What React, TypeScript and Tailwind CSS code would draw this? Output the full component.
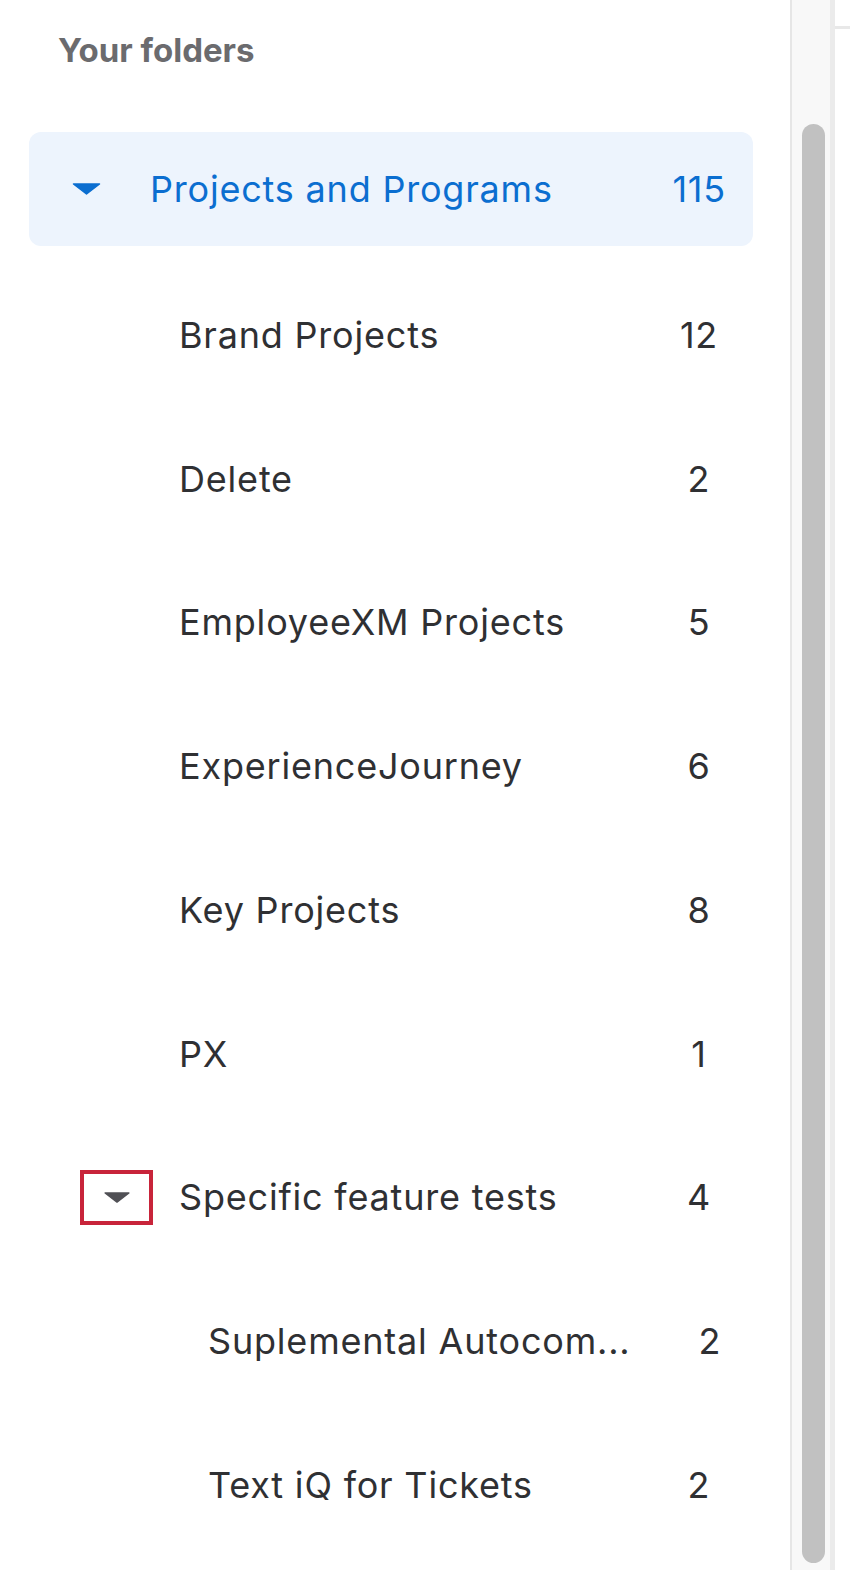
import React from "react";

type Row = { name: string; count: string; level: 1 | 2; toggle?: boolean; countShift?: boolean };

const rows: Row[] = [
  { name: "Brand Projects", count: "12", level: 1 },
  { name: "Delete", count: "2", level: 1 },
  { name: "EmployeeXM Projects", count: "5", level: 1 },
  { name: "ExperienceJourney", count: "6", level: 1 },
  { name: "Key Projects", count: "8", level: 1 },
  { name: "PX", count: "1", level: 1 },
  { name: "Specific feature tests", count: "4", level: 1, toggle: true },
  { name: "Suplemental Autocom...", count: "2", level: 2, countShift: true },
  { name: "Text iQ for Tickets", count: "2", level: 2 },
];

function Caret({ color, w, h }: { color: string; w: number; h: number }) {
  return (
    <svg width={w} height={h} viewBox="0 0 28 12" className="block">
      <path d="M1 1 L27 1 L14 11 Z" fill={color} stroke={color} strokeWidth="1.5" strokeLinejoin="round" />
    </svg>
  );
}

export default function App() {
  return (
    <div
      className="flex w-[850px] h-[1570px] overflow-hidden bg-white text-[#2f3033]"
      style={{ fontFamily: "Inter, Roboto, sans-serif" }}
    >
      {/* main panel */}
      <div className="w-[790px] flex flex-col">
        <div className="pl-[58px] pt-[28px] h-[132px]">
          <div className="text-[33px] leading-[44px] font-bold text-[#6b6b6e]">Your folders</div>
        </div>
        <div className="ml-[29px] w-[724px] h-[114px] rounded-[12px] bg-[#edf4fd] flex items-center pl-[43px] pr-[27px] text-[#0b6ed0] text-[36px] tracking-[0.8px]">
          <Caret color="#0b6ed0" w={29} h={12} />
          <span className="ml-[49px] flex-1">Projects and Programs</span>
          <span>115</span>
        </div>
        <div className="mt-[17px] flex flex-col text-[36px] tracking-[0.8px]">
          {rows.map((r) => (
            <div key={r.name} className="h-[143.75px] flex items-center">
              <div className="w-[179px] flex justify-end pr-[26px]">
                {r.toggle && (
                  <div className="w-[73px] h-[55px] border-[4px] border-[#c8243a] flex items-center justify-center">
                    <Caret color="#505055" w={28} h={11} />
                  </div>
                )}
              </div>
              <span className={`whitespace-nowrap ${r.level === 2 ? "ml-[29px]" : ""}`}>{r.name}</span>
              <div className="flex-1" />
              <span className={`w-[60px] text-center ${r.countShift ? "mr-[50px]" : "mr-[61px]"}`}>
                {r.count}
              </span>
            </div>
          ))}
        </div>
      </div>
      {/* scrollbar track */}
      <div className="w-[45px] h-full bg-[#f8f8f8] border-l-[2px] border-l-[#e6e6e6] border-r-[5px] border-r-[#ebebeb] pt-[124px] pb-[7px] flex justify-center">
        <div className="ml-[4px] w-[23px] h-full rounded-full bg-[#c1c1c1]" />
      </div>
      {/* right edge */}
      <div className="w-[15px] h-full">
        <div className="mt-[26px] h-[3px] bg-[#e8e8e8]" />
      </div>
    </div>
  );
}
